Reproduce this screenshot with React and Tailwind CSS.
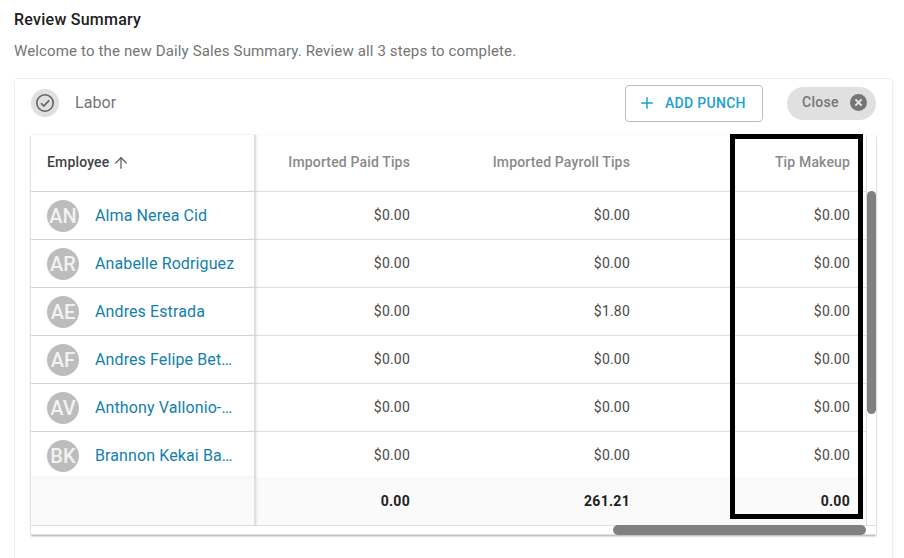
import { Plus, ArrowUp } from "lucide-react";

const rows = [
  { initials: "AN", name: "Alma Nerea Cid", payroll: "$0.00" },
  { initials: "AR", name: "Anabelle Rodriguez", payroll: "$0.00" },
  { initials: "AE", name: "Andres Estrada", payroll: "$1.80" },
  { initials: "AF", name: "Andres Felipe Betancourt", payroll: "$0.00" },
  { initials: "AV", name: "Anthony Vallonio-Smith", payroll: "$0.00" },
  { initials: "BK", name: "Brannon Kekai Baldwin", payroll: "$0.00" },
];

function Row({ row }) {
  return (
    <div className="flex h-[48px] border-b border-[#e0e0e0] text-[14px] text-[#4a4a4a] tracking-[0.2px] last-of-type:h-[45px] last-of-type:border-b-0">
      <div className="flex w-[225px] shrink-0 items-start border-r-2 border-[#e0e0e0] pl-[16px] pr-[18px] pt-[8px] shadow-[1px_0_2px_rgba(0,0,0,0.08)]">
        <div className="flex h-[32px] w-[32px] shrink-0 items-center justify-center rounded-full bg-[#bdbdbd] text-[20px] font-medium tracking-normal text-[#f2f2f2]">
          {row.initials}
        </div>
        <div className="ml-[16px] truncate text-[16px] leading-[32px] tracking-[0.11px] text-[#1480b0]">{row.name}</div>
      </div>
      <div className="w-[170px] pr-[16px] pt-[13px] text-right leading-[20px]">$0.00</div>
      <div className="w-[220px] pr-[16px] pt-[13px] text-right leading-[20px]">{row.payroll}</div>
      <div className="w-[220px] pr-[16px] pt-[13px] text-right leading-[20px]">$0.00</div>
    </div>
  );
}

export default function App() {
  return (
    <div className="relative h-[558px] w-[904px] overflow-hidden bg-white pl-[14px] pt-[10px] font-['Roboto',sans-serif]">
      <h1 className="text-[16px] leading-[20px] font-medium tracking-[0.25px] text-[#212121]">Review Summary</h1>
      <p className="mt-[11px] text-[15px] leading-[20px] tracking-[0.14px] text-[#757575]">
        Welcome to the new Daily Sales Summary. Review all 3 steps to complete.
      </p>

      <div className="mt-[17px] h-[500px] w-[879px] rounded-[4px] border border-[#eeeeee] px-[16px]">
        <div className="mb-[8px] flex h-[48px] items-center">
          <div className="flex h-[28px] w-[28px] items-center justify-center rounded-full bg-[#e0e0e0]">
            <svg width="20" height="20" viewBox="0 0 20 20" fill="none" stroke="#616161" strokeWidth="1.6">
              <circle cx="10" cy="10" r="8.2" />
              <path d="M6 10.2l2.8 2.8 5.4-5.6" />
            </svg>
          </div>
          <span className="ml-[16px] text-[16px] tracking-[0.1px] text-[#757575]">Labor</span>
          <button className="ml-auto flex h-[37px] w-[138px] items-center rounded-[4px] border border-[#bdbdbd] pl-[12px] text-[14px] font-medium tracking-[0.3px] text-[#1ba1d8]">
            <Plus size={18} strokeWidth={2} className="mr-[9px]" />
            ADD PUNCH
          </button>
          <div className="ml-[24px] flex h-[33px] w-[89px] items-center justify-between rounded-full bg-[#e0e0e0] pb-[1px] pl-[15px] pr-[9px] text-[14px] font-medium tracking-[0.3px] text-[#757575]">
            Close
            <svg width="17" height="17" viewBox="0 0 17 17">
              <circle cx="8.5" cy="8.5" r="8.5" fill="#757575" />
              <path d="M5.4 5.4l6.2 6.2M11.6 5.4l-6.2 6.2" stroke="#e8e8e8" strokeWidth="2" />
            </svg>
          </div>
        </div>

        <div className="w-[845px] shadow-[0_1px_2px_rgba(0,0,0,0.35)]">
          <div className="flex">
            <div className="w-[835px]">
              <div className="flex h-[57px] border-b border-[#e0e0e0] text-[14px] font-medium tracking-[0.15px] text-[#8a8a8a]">
                <div className="flex w-[225px] shrink-0 items-center border-r-2 border-[#e0e0e0] pb-[1px] pl-[16px] text-[#424242] shadow-[1px_0_2px_rgba(0,0,0,0.08)]">
                  Employee
                  <ArrowUp size={18} strokeWidth={1.75} className="ml-[3px] text-[#616161]" />
                </div>
                <div className="flex w-[170px] items-center justify-end pb-[2px] pr-[16px]">Imported Paid Tips</div>
                <div className="flex w-[220px] items-center justify-end pb-[2px] pr-[16px]">Imported Payroll Tips</div>
                <div className="flex w-[220px] items-center justify-end pb-[2px] pr-[16px]">Tip Makeup</div>
              </div>
              <div>
                {rows.map((row) => (
                  <Row key={row.initials} row={row} />
                ))}
              </div>
              <div className="flex h-[48px] bg-[#fafafa] text-[14px] font-bold tracking-[0.3px] text-[#212121]">
                <div className="w-[225px] shrink-0 border-r-2 border-[#e0e0e0] shadow-[1px_0_2px_rgba(0,0,0,0.08)]" />
                <div className="flex w-[170px] items-center justify-end pr-[16px]">0.00</div>
                <div className="flex w-[220px] items-center justify-end pr-[16px]">261.21</div>
                <div className="flex w-[220px] items-center justify-end pr-[16px]">0.00</div>
              </div>
            </div>
            <div className="w-[10px] border-l border-[#e0e0e0] pt-[56px]">
              <div className="h-[223px] rounded-[5px] bg-[#808080]" />
            </div>
          </div>
          <div className="flex h-[10px] border-y border-[#e0e0e0] pl-[582px] pr-[10px]">
            <div className="h-[10px] w-full -translate-y-px rounded-full bg-[#808080]" />
          </div>
        </div>
      </div>

      <div className="absolute left-[730px] top-[134px] h-[385px] w-[133px] border-[5px] border-black" />
    </div>
  );
}
